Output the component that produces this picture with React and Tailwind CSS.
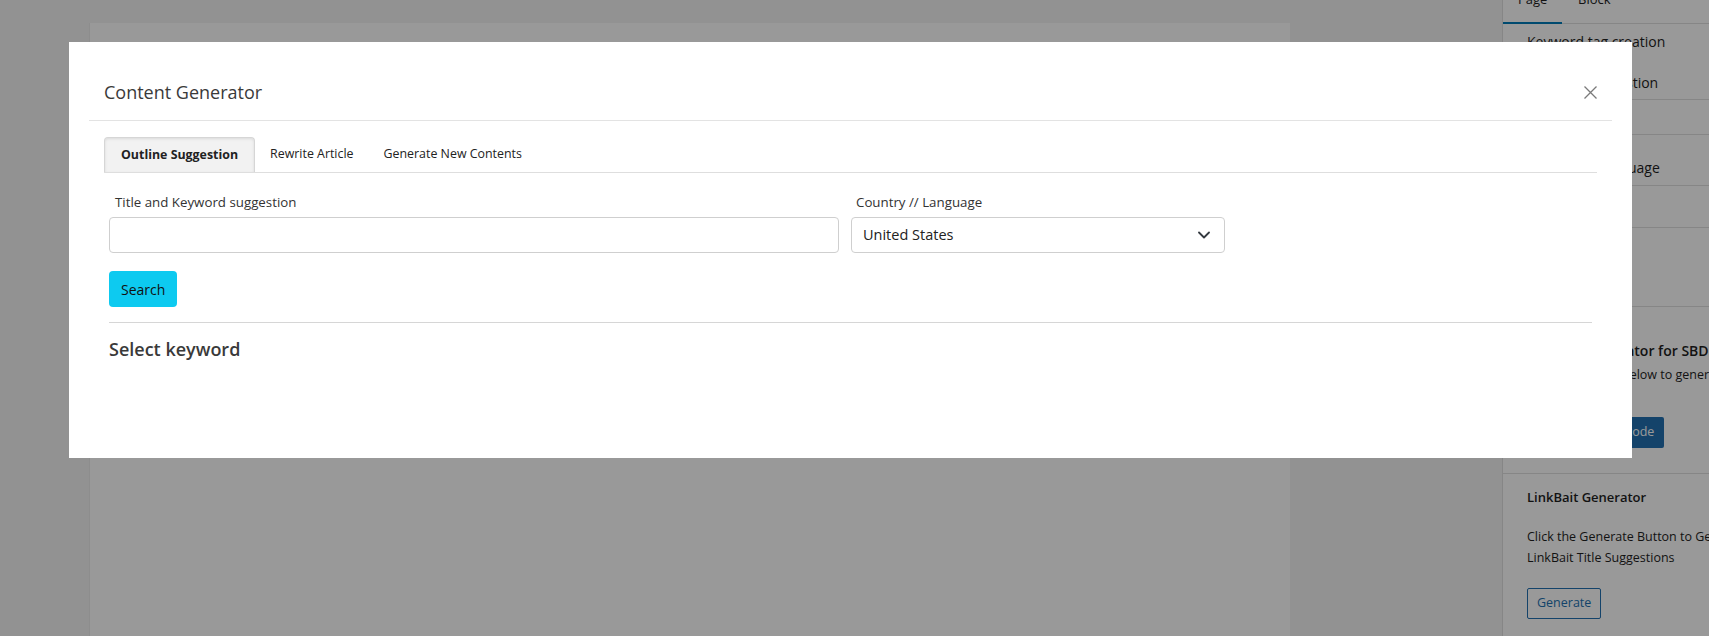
import React from "react";

const Sidebar = () => {
  return (
    <aside className="w-[207px] shrink-0 h-full bg-white border-l border-[#e0e0e0] overflow-hidden text-[#1e1e1e]">
      <div className="-mt-[24px] h-[48px] flex text-[13px] shadow-[inset_0_-1px_0_#e0e0e0]">
        <div className="w-[59px] pl-[15px] flex items-center shadow-[inset_0_-2px_0_#007cba]">Page</div>
        <div className="pl-[16px] flex items-center">Block</div>
      </div>
      <div className="h-[76px] border-b border-[#e0e0e0] px-[24px] pt-[8px] text-[14px] leading-[20px]">
        <div className="font-medium">Keyword tag creation</div>
        <div className="mt-[21px]">Keyword suggestion</div>
      </div>
      <div className="h-[35px] border-b border-[#e0e0e0]"></div>
      <div className="h-[51px] border-b border-[#e0e0e0] px-[24px] pt-[23px] text-[14px] leading-[20px]">
        Country // Language
      </div>
      <div className="h-[42px] border-b border-[#e0e0e0]"></div>
      <div className="h-[79px] border-b border-[#e0e0e0]"></div>
      <div className="h-[167px] border-b border-[#e0e0e0] px-[24px] pt-[34px] text-[12.5px] whitespace-nowrap">
        <div className="font-semibold text-[14px] leading-[20px]">Content Generator for SBD Blocks</div>
        <div className="mt-[4px] leading-[20px]">Click the button below to generate</div>
        <button className="mt-[32px] h-[31px] px-[10px] rounded-[2px] bg-[#2271b1] text-white text-[12.5px]">
          Generate Shortcode
        </button>
      </div>
      <div className="px-[24px] pt-[13px] text-[12.5px]">
        <div className="font-semibold text-[13px] leading-[20px]">LinkBait Generator</div>
        <div className="mt-[19px] leading-[21px] w-[200px]">Click the Generate Button to Get LinkBait Title Suggestions</div>
        <button className="mt-[20px] h-[31px] px-[9px] rounded-[2px] border border-[#2271b1] text-[#2271b1] text-[12.5px]">
          Generate
        </button>
      </div>
    </aside>
  );
};

const CloseIcon = () => (
  <svg width="13" height="13" viewBox="0 0 13 13" fill="none">
    <path d="M0.5 0.5 L12.5 12.5 M12.5 0.5 L0.5 12.5" stroke="#7a7a7a" strokeWidth="1.3" />
  </svg>
);

const Chevron = () => (
  <svg width="12" height="8" viewBox="0 0 12 8" fill="none">
    <path d="M1 1.5 L6 6.5 L11 1.5" stroke="#343a40" strokeWidth="1.8" strokeLinecap="round" strokeLinejoin="round" />
  </svg>
);

const ContentGeneratorModal = () => {
  return (
    <div className="absolute inset-0 bg-black/40 pl-[69px] pt-[42px]">
      <div className="w-[1563px] h-[416px] bg-white text-[#333]">
        <div className="mx-[20px] h-[79px] pt-[22px] border-b border-[#e3e3e3] flex items-center justify-between px-[15px]">
          <h4 className="text-[18px] leading-[24px] text-[#3a3a3a] -mt-[1px]">Content Generator</h4>
          <button className="w-[13px] h-[13px] flex items-center justify-center">
            <CloseIcon />
          </button>
        </div>
        <div className="px-[35px] pt-[16px]">
          <div className="flex h-[36px] border-b border-[#dedede] text-[12.4px] text-[#222]">
            <div className="h-full px-[16px] flex items-center bg-[#f2f2f2] border border-b-0 border-[#d6d6d6] rounded-t-[4px] shadow-[inset_0_1px_3px_rgba(0,0,0,0.1)] font-bold">
              Outline Suggestion
            </div>
            <div className="h-full px-[15px] flex items-center">Rewrite Article</div>
            <div className="h-full px-[15px] flex items-center">Generate New Contents</div>
          </div>
          <div className="px-[5px] pt-[19px]">
            <div className="flex gap-[12px]">
              <div className="w-[730px]">
                <label className="block pl-[6px] text-[13.3px] leading-[20px]">Title and Keyword suggestion</label>
                <input
                  type="text"
                  className="mt-[5px] block h-[36px] w-full border border-[#cfcfcf] rounded-[4px] px-[12px] text-[15px] outline-none"
                />
              </div>
              <div className="w-[374px]">
                <label className="block pl-[5px] text-[13.3px] leading-[20px]">Country // Language</label>
                <div className="mt-[5px] h-[36px] w-full border border-[#cfcfcf] rounded-[4px] pl-[11px] pr-[14px] flex items-center justify-between text-[14.5px] text-[#222]">
                  <span>United States</span>
                  <Chevron />
                </div>
              </div>
            </div>
            <button className="mt-[18px] h-[36px] px-[12px] bg-[#0dcaf0] rounded-[4px] text-[14px] text-[#111]">
              Search
            </button>
            <hr className="mt-[15px] border-0 border-t border-[#d6d6d6]" />
            <h5 className="mt-[14px] text-[18px] leading-[24px] font-semibold text-[#3a3a3a]">Select keyword</h5>
          </div>
        </div>
      </div>
    </div>
  );
};

const App = () => {
  return (
    <div className="relative w-[1709px] h-[636px] overflow-hidden bg-[#f4f4f4] font-['Open_Sans',sans-serif]">
      <div className="flex h-full">
        <div className="flex-1 flex flex-col">
          <div className="h-[23px] bg-[#f3f3f3]"></div>
          <div className="flex-1 pl-[89px]">
            <div className="w-[1201px] h-full bg-white border-l border-[#ececec]"></div>
          </div>
        </div>
        <Sidebar />
      </div>
      <ContentGeneratorModal />
    </div>
  );
};

export default App;
